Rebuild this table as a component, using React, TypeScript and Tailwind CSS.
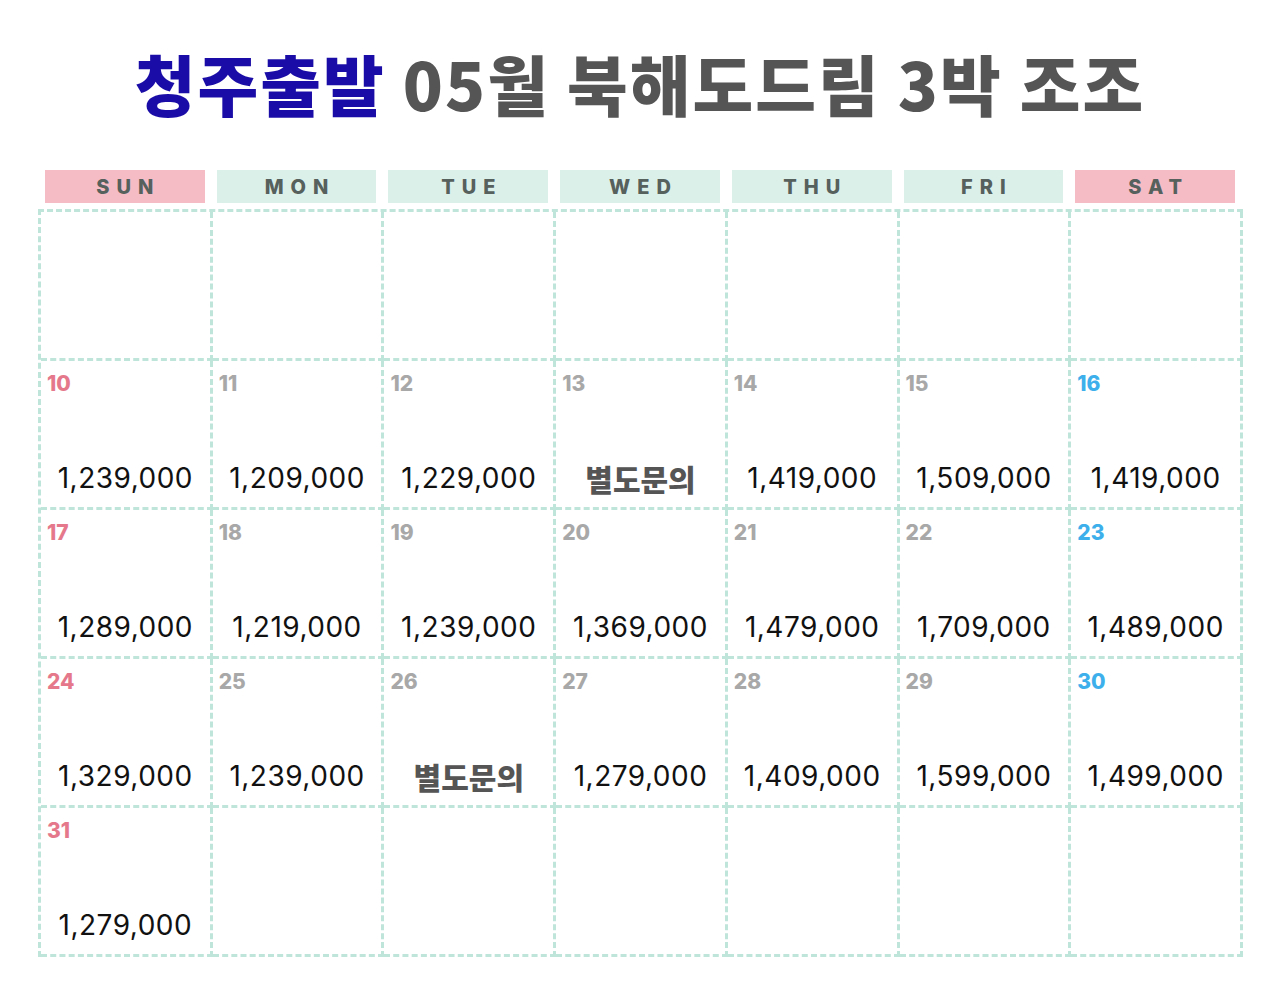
import React from 'react';

type Cell = { day?: number; price?: string; ask?: boolean };

const days = ['SUN', 'MON', 'TUE', 'WED', 'THU', 'FRI', 'SAT'];

const rows: Cell[][] = [
  [{}, {}, {}, {}, {}, {}, {}],
  [
    { day: 10, price: '1,239,000' },
    { day: 11, price: '1,209,000' },
    { day: 12, price: '1,229,000' },
    { day: 13, ask: true },
    { day: 14, price: '1,419,000' },
    { day: 15, price: '1,509,000' },
    { day: 16, price: '1,419,000' },
  ],
  [
    { day: 17, price: '1,289,000' },
    { day: 18, price: '1,219,000' },
    { day: 19, price: '1,239,000' },
    { day: 20, price: '1,369,000' },
    { day: 21, price: '1,479,000' },
    { day: 22, price: '1,709,000' },
    { day: 23, price: '1,489,000' },
  ],
  [
    { day: 24, price: '1,329,000' },
    { day: 25, price: '1,239,000' },
    { day: 26, ask: true },
    { day: 27, price: '1,279,000' },
    { day: 28, price: '1,409,000' },
    { day: 29, price: '1,599,000' },
    { day: 30, price: '1,499,000' },
  ],
  [{ day: 31, price: '1,279,000' }, {}, {}, {}, {}, {}, {}],
];

const dayColor = (col: number) =>
  col === 0 ? 'text-[#e5788b]' : col === 6 ? 'text-[#3db0ec]' : 'text-[#a8a8a8]';

const App: React.FC = () => {
  return (
    <div className="min-h-[989px] bg-white pt-[42px] font-['Inter','Noto_Sans_CJK_KR',sans-serif]">
      <h1 className="text-center text-[66px] leading-[80px] font-black tracking-[2px] text-[#555555] font-['Noto_Sans_CJK_KR','Noto_Sans',sans-serif]">
        <span className="text-[#1a0ca6]">청주출발</span> 05월 북해도드림 3박 조조
      </h1>

      <div className="mx-[39px] mt-[48px] grid w-[1202px] grid-cols-7">
        {days.map((d, i) => (
          <div key={d} className="px-[6px]">
            <div
              className={`flex h-[33px] items-center justify-center pl-[7px] text-[20px] font-extrabold tracking-[7px] text-[#56605c] ${
                i === 0 || i === 6 ? 'bg-[#f5bcc6]' : 'bg-[#dcf0ea]'
              }`}
            >
              {d}
            </div>
          </div>
        ))}
      </div>

      <div className="mx-[38px] mt-[6px] grid w-[1205px] grid-cols-7 border-l-[3px] border-t-[3px] border-dashed border-[#bfe4d9]">
        {rows.map((row, r) =>
          row.map((c, i) => (
            <div
              key={`${r}-${i}`}
              className="flex h-[149px] flex-col border-b-[3px] border-r-[3px] border-dashed border-[#bfe4d9] px-[6px] pt-[10px]"
            >
              <div className={`h-[26px] text-[21px] font-extrabold leading-[26px] ${dayColor(i)}`}>
                {c.day ?? ''}
              </div>
              {c.price && (
                <div className="mt-[64px] text-center text-[28px] leading-[34px] tracking-[0.5px] text-[#111111]">
                  {c.price}
                </div>
              )}
              {c.ask && (
                <div className="mt-[64px] text-center text-[30px] font-black leading-[34px] text-[#555555] font-['Noto_Sans_CJK_KR',sans-serif]">
                  별도문의
                </div>
              )}
            </div>
          ))
        )}
      </div>
    </div>
  );
};

export default App;
